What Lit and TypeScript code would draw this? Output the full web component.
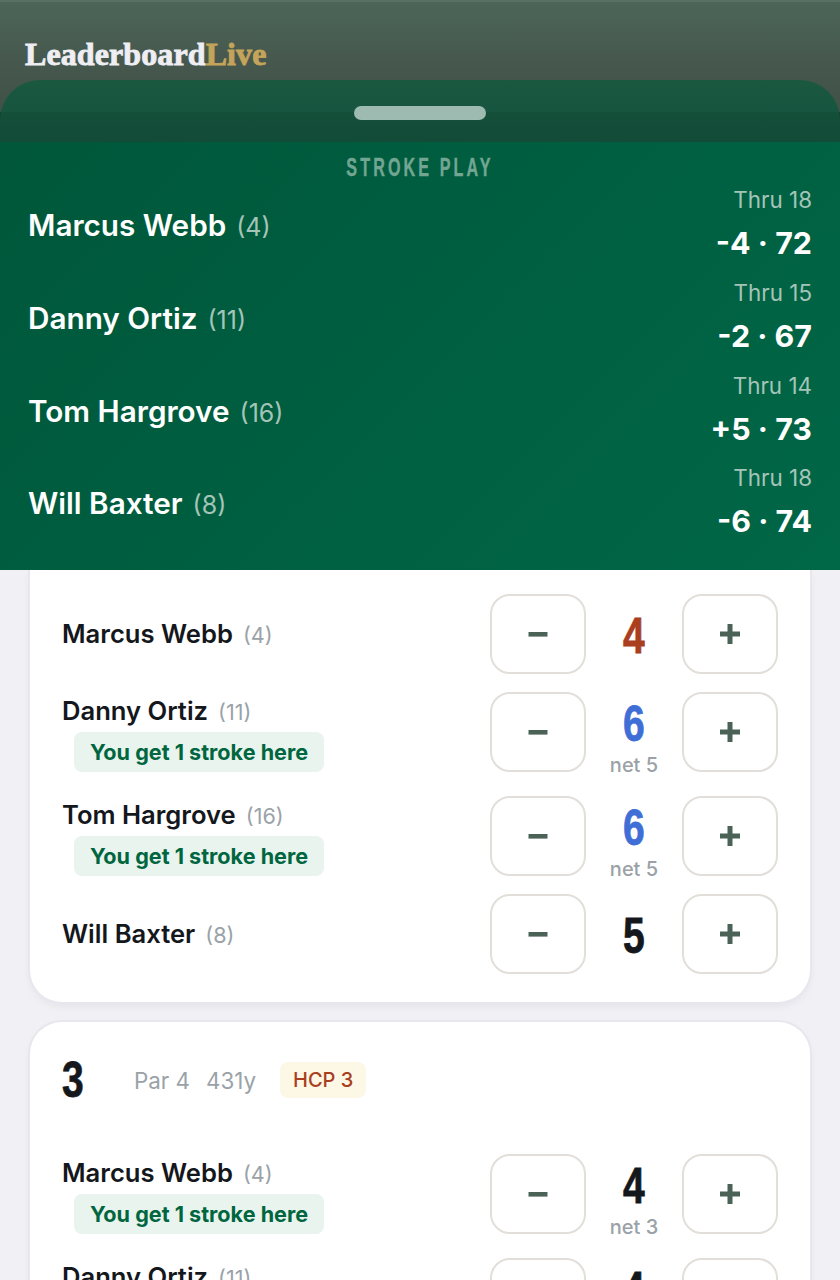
import { LitElement, html, css } from "lit";
import { customElement } from "lit/decorators.js";

type P = { name: string; hcp: number; score: number; net?: number; cls?: string; chip?: boolean; tight?: boolean };
const board = [
  { name: "Marcus Webb", hcp: 4, thru: 18, total: "-4 · 72" },
  { name: "Danny Ortiz", hcp: 11, thru: 15, total: "-2 · 67" },
  { name: "Tom Hargrove", hcp: 16, thru: 14, total: "+5 · 73" },
  { name: "Will Baxter", hcp: 8, thru: 18, total: "-6 · 74" },
];
const hole2: P[] = [
  { name: "Marcus Webb", hcp: 4, score: 4, cls: "red" },
  { name: "Danny Ortiz", hcp: 11, score: 6, net: 5, cls: "blue", chip: true },
  { name: "Tom Hargrove", hcp: 16, score: 6, net: 5, cls: "blue", chip: true, tight: true },
  { name: "Will Baxter", hcp: 8, score: 5 },
];
const hole3: P[] = [
  { name: "Marcus Webb", hcp: 4, score: 4, net: 3, chip: true },
  { name: "Danny Ortiz", hcp: 11, score: 4, net: 3, chip: true },
];

@customElement("app-root")
export class AppRoot extends LitElement {
  static styles = css`
    :host { display: block; width: 840px; height: 1280px; overflow: hidden; background: #f0f0f5; font-family: Inter, "Liberation Sans", sans-serif; color: #14181c; }
    * { box-sizing: border-box; }
    .top { height: 112px; margin-bottom: -32px; padding: 33px 25px 0; background: linear-gradient(180deg, #4c6558 0%, #47594e 50%, #405148 100%); border-top: 2px solid #587064; }
    .logo { font-family: "Liberation Serif", serif; font-weight: 700; font-size: 32px; line-height: 38px; color: #eeeef3; letter-spacing: .1px; -webkit-text-stroke: .9px currentColor; }
    .logo span { color: #c4a35a; }
    .wrap { background: linear-gradient(180deg, transparent 0, transparent 32px, #1a3a2c 32px); position: relative; }
    .sheet { height: 62px; border-radius: 40px 40px 0 0; background: linear-gradient(180deg, #1a5840 0, #175540 32px, #144f3a 32px, #124c39 100%); padding-top: 26px; display: flex; justify-content: center; }
    .grab { width: 132px; height: 14px; border-radius: 7px; background: #9dbbb0; }
    .panel { position: relative; z-index: 1; height: 428px; background: linear-gradient(135deg, #00573a 0%, #006747 100%); padding: 10px 28px 0; color: #fff; }
    .label { font-family: "Liberation Sans", sans-serif; font-weight: 700; font-size: 26px; line-height: 30px; letter-spacing: 5px; text-align: center; color: #73a692; transform: scaleX(.62); margin-bottom: -2px; white-space: nowrap; -webkit-text-stroke: .4px currentColor; }
    .lb { height: 92.67px; display: flex; justify-content: space-between; align-items: center; }
    .lbname { font-size: 29.7px; font-weight: 600; line-height: 36px; display: flex; align-items: baseline; gap: 10px; }
    .lbname small { font-size: 25px; font-weight: 400; color: #a5c4b8; }
    .lbr { text-align: right; padding-bottom: 1px; }
    .thru { font-size: 22.4px; line-height: 30px; color: #a5c4b8; margin-bottom: 5px; }
    .tot { font-size: 30.4px; font-weight: 700; line-height: 46px; }
    .body { padding: 0 30px; display: flex; flex-direction: column; gap: 20px; }
    .card { background: #fff; box-shadow: 0 0 0 2px #e7e7ed, 0 4px 8px rgba(20,20,40,.06); border-radius: 32px; padding: 40px 32px 28px; }
    .card.first { border-radius: 0 0 32px 32px; padding-top: 24px; }
    .hd { display: flex; align-items: center; height: 36px; margin-bottom: 56px; }
    .cond { font-family: "Liberation Sans", sans-serif; font-weight: 700; font-size: 50px; display: inline-block; transform: scaleX(.78); -webkit-text-stroke: .8px currentColor; }
    .hole { width: 72px; line-height: 36px; height: 36px; transform-origin: left center; }
    .meta { font-size: 22.4px; color: #9aa2a8; margin-right: 16px; }
    .hcp { margin-left: 8px; background: #fdf7e6; color: #a93f1e; font-size: 20px; font-weight: 500; height: 36px; width: 86px; border-radius: 8px; display: flex; align-items: center; justify-content: center; }
    .rows { display: flex; flex-direction: column; gap: 18px; }
    .row { display: flex; align-items: flex-start; }
    .who { flex: 1; min-height: 80px; display: flex; flex-direction: column; justify-content: center; align-items: flex-start; }
    .n { font-size: 25.6px; font-weight: 600; line-height: 38px; display: flex; align-items: baseline; gap: 10px; }
    .n small { font-size: 21.6px; font-weight: 400; color: #9aa2a8; }
    .chip { margin: 1px 0 0 12px; height: 40px; width: 250px; border-radius: 8px; background: #eaf4ee; color: #00663f; font-size: 21.6px; font-weight: 700; line-height: 40px; text-align: center; white-space: nowrap; }
    button { width: 96px; height: 80px; border: 2px solid #e2dfda; background: #fff; border-radius: 20px; padding: 0; display: flex; align-items: center; justify-content: center; color: #4b6356; }
    .val { width: 96px; display: flex; flex-direction: column; align-items: center; min-height: 80px; justify-content: center; }
    .tight .val { margin-bottom: -6px; }
    .score { line-height: 64px; height: 60px; }
    .score.red { color: #a93f1e; }
    .score.blue { color: #3f6fd6; }
    .net { font-size: 20px; font-weight: 500; color: #9aa2a8; line-height: 26px; }
  `;

  row(p: P) {
    return html`<div class="row ${p.tight ? "tight" : ""}">
      <div class="who">
        <div class="n">${p.name} <small>(${p.hcp})</small></div>
        ${p.chip ? html`<div class="chip">You get 1 stroke here</div>` : ""}
      </div>
      <button aria-label="minus"><svg width="20" height="20" viewBox="0 0 20 20"><rect x=".5" y="8" width="19" height="4.6" fill="currentColor"/></svg></button>
      <div class="val">
        <div class="cond score ${p.cls ?? ""}">${p.score}</div>
        ${p.net ? html`<div class="net">net ${p.net}</div>` : ""}
      </div>
      <button aria-label="plus"><svg width="20" height="20" viewBox="0 0 20 20"><path d="M0 7.6h7.5V0h5v7.6H20v4.8h-7.5V20h-5v-7.6H0z" fill="currentColor"/></svg></button>
    </div>`;
  }

  render() {
    return html`
      <div class="top"><div class="logo">Leaderboard<span>Live</span></div></div>
      <div class="wrap"><div class="sheet"><div class="grab"></div></div></div>
      <div class="panel">
        <div class="label">STROKE PLAY</div>
        ${board.map(b => html`<div class="lb">
          <div class="lbname">${b.name} <small>(${b.hcp})</small></div>
          <div class="lbr"><div class="thru">Thru ${b.thru}</div><div class="tot">${b.total}</div></div>
        </div>`)}
      </div>
      <div class="body">
        <div class="card first"><div class="rows">${hole2.map(p => this.row(p))}</div></div>
        <div class="card">
          <div class="hd"><div class="cond hole">3</div><div class="meta">Par 4</div><div class="meta">431y</div><div class="hcp">HCP 3</div></div>
          <div class="rows">${hole3.map(p => this.row(p))}</div>
        </div>
      </div>`;
  }
}
